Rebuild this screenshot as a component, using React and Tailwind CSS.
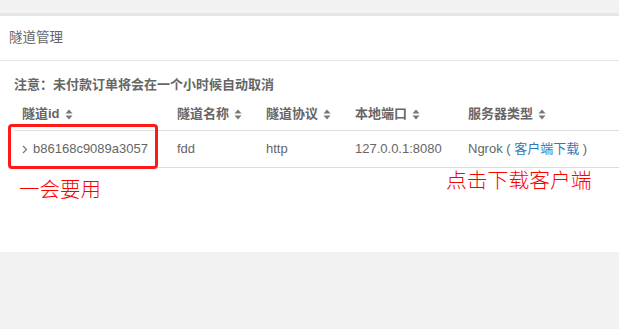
import React from 'react';

const cols = [
    { label: "隧道id", w: "w-[155px]" },
    { label: "隧道名称", w: "w-[89px]" },
    { label: "隧道协议", w: "w-[89px]" },
    { label: "本地端口", w: "w-[113px]" },
    { label: "服务器类型", w: "flex-1" },
];

function SortIcon() {
    return (
        <svg width="8" height="11" viewBox="0 0 8 11" className="ml-[5px] shrink-0">
            <path d="M4 0.5 L7.5 4.5 L0.5 4.5 Z" fill="#777" />
            <path d="M4 10.5 L7.5 6.5 L0.5 6.5 Z" fill="#777" />
        </svg>
    );
}

export default function App() {
    return (
        <div
            className="w-[619px] h-[329px] bg-[#f2f2f2] flex flex-col text-[13px] text-[#666]"
            style={{ fontFamily: '"Liberation Sans", Arial, "Noto Sans CJK SC", sans-serif' }}
        >
            <div className="h-[13px] shrink-0" />
            <div className="h-[3px] bg-[#e4e6e9] shrink-0" />
            <div className="relative bg-white h-[236px] shrink-0 flex flex-col">
                <div className="h-[45px] flex items-center pl-[9px] border-b border-[#e6e6e6] shrink-0 text-[13.5px]">
                    隧道管理
                </div>
                <div className="pl-[14px] pt-[15px] font-bold leading-[17px]">
                    注意：未付款订单将会在一个小时候自动取消
                </div>
                <div className="pl-[14px] mt-[5px]">
                    <div className="flex h-[33px] items-center border-b border-[#dddddd] font-bold">
                        {cols.map((c) => (
                            <div key={c.label} className={`${c.w} px-[8px] flex items-center`}>
                                <span>{c.label}</span>
                                <SortIcon />
                            </div>
                        ))}
                    </div>
                    <div className="flex h-[37px] items-center border-b border-[#dddddd]">
                        <div className="w-[155px] px-[8px] flex items-center">
                            <svg width="6" height="9" viewBox="0 0 6 9" className="mr-[5px]">
                                <path d="M1 1 L4.5 4.5 L1 8" stroke="#777" strokeWidth="1.2" fill="none" />
                            </svg>
                            <span>b86168c9089a3057</span>
                        </div>
                        <div className="w-[89px] px-[8px]">fdd</div>
                        <div className="w-[89px] px-[8px]">http</div>
                        <div className="w-[113px] px-[8px]">127.0.0.1:8080</div>
                        <div className="flex-1 px-[8px] whitespace-pre">
                            {"Ngrok ( "}<span className="text-[#337ab7]">客户端下载</span>{" )"}
                        </div>
                    </div>
                </div>

                <div className="absolute left-[8px] top-[108px] w-[150px] h-[45px] border-[3px] border-[#ff1a1a] rounded-[4px]" />
                <div
                    className="absolute left-[19px] top-[160px] text-[20.5px] leading-[24px] text-[#ff0000] font-light"
                    style={{ fontFamily: '"Noto Sans CJK SC", sans-serif' }}
                >
                    一会要用
                </div>
                <div
                    className="absolute left-[446px] top-[151px] text-[20.8px] leading-[24px] text-[#ff0000] font-light"
                    style={{ fontFamily: '"Noto Sans CJK SC", sans-serif' }}
                >
                    点击下载客户端
                </div>
            </div>
        </div>
    );
}
